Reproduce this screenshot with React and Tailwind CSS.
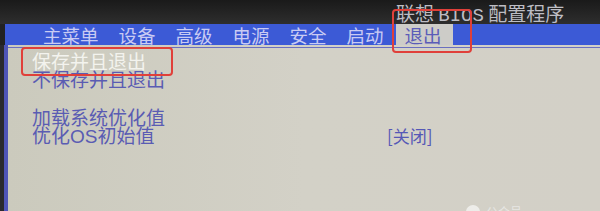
import React from 'react';

const menu = ['主菜单', '设备', '高级', '电源', '安全', '启动'];

export default function App() {
  const cjk = { fontFamily: '"Noto Sans CJK SC", "Noto Sans", sans-serif' };
  return (
    <div className="relative w-[600px] h-[211px] overflow-hidden bg-[#222]" style={cjk}>
      {/* top dark strip with title */}
      <div className="h-[24px] bg-gradient-to-b from-[#1a1a1a] to-[#2e2e2e] flex items-end justify-start pl-[396px]">
        <span className="text-[19px] leading-[22px] text-[#bdbdc4] whitespace-nowrap translate-y-[3px]">
          联想 <span className="font-['Liberation_Mono',monospace]">BIOS</span> 配置程序
        </span>
      </div>

      {/* menu bar */}
      <div className="h-[21px] ml-[5px] bg-[#3c5ad6] flex items-stretch">
        <div className="flex items-center pl-[38px] gap-[20px] text-[18.5px] leading-[20px] text-[#c9cbf3]">
          {menu.map((m) => (
            <span key={m} className="whitespace-nowrap">{m}</span>
          ))}
        </div>
        <div className="ml-[12px] w-[57px] bg-[#cdccc8] text-[#5b5cb8] text-[18.5px] leading-[20px] pl-[9px] flex items-center">
          退出
        </div>
      </div>

      {/* body panel */}
      <div className="flex h-[166px]">
        <div className="w-[4px] bg-[#2a2a2e]" />
        <div className="w-[4px] bg-[#4f55b8]" />
        <div className="flex-1 bg-gradient-to-r from-[#cbcabd] via-[#d3d1c7] to-[#d3d0c7] pt-[2px]">
          <div className="h-[1px] bg-[#6a6fc0]" />
          <div className="pl-[24px] pt-[4px] text-[19px] leading-[18px] text-[#5a5cb3]">
            <div className="text-[#f3f3ee]">保存并且退出</div>
            <div>不保存并且退出</div>
            <div className="h-[20px]" />
            <div>加载系统优化值</div>
            <div className="flex items-center">
              <span className="w-[355px]">优化<span className="font-['Liberation_Sans',sans-serif]">OS</span>初始值</span>
              <span className="text-[17px] text-[#5558b6]">[关闭]</span>
            </div>
          </div>
        </div>
      </div>

      {/* watermark */}
      <div className="absolute left-[466px] top-[205px] flex items-center gap-[6px] opacity-80">
        <div className="w-[14px] h-[14px] rounded-full bg-[#f4f4f2]" />
        <span className="text-[12px] leading-[14px] text-[#ececea]">公众号</span>
      </div>

      {/* red annotation boxes */}
      <div className="absolute left-[21px] top-[47px] w-[152px] h-[29px] border-2 border-[#e0403a] rounded-[4px]" />
      <div className="absolute left-[392px] top-[9px] w-[80px] h-[44px] border-2 border-[#e0403a] rounded-[4px]" />
    </div>
  );
}
